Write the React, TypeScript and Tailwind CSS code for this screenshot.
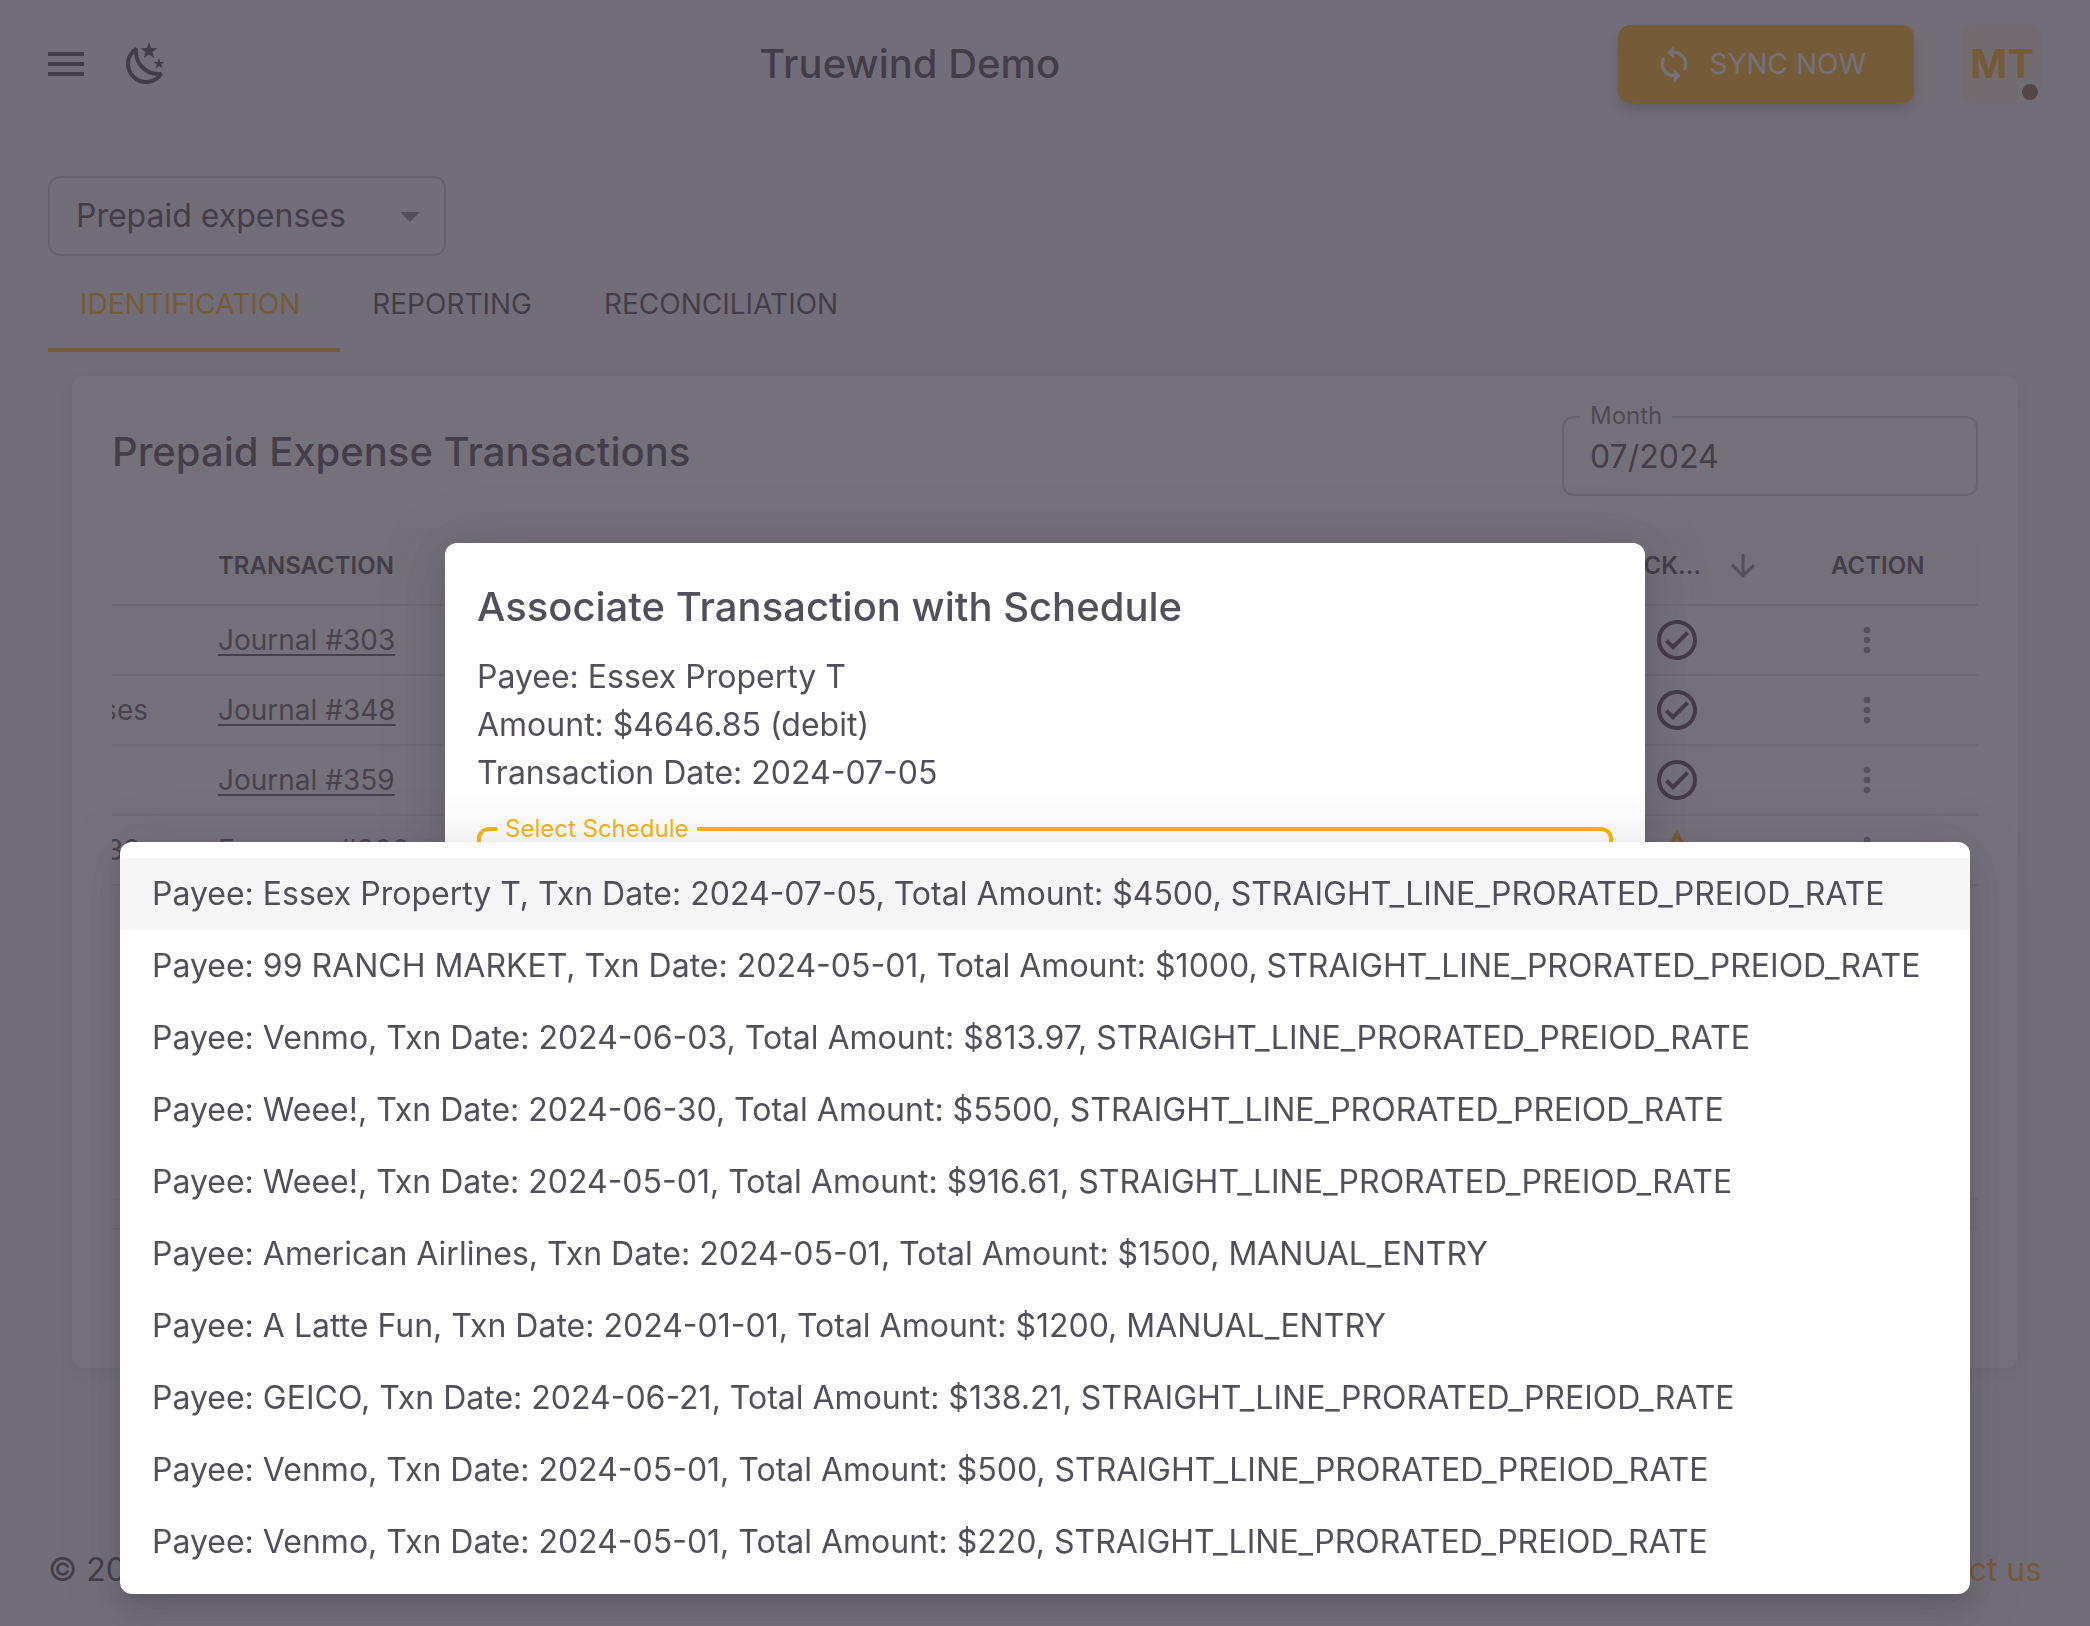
import React, { useState } from 'react';

const SCHEDULES = [
  'Payee: Essex Property T, Txn Date: 2024-07-05, Total Amount: $4500, STRAIGHT_LINE_PRORATED_PREIOD_RATE',
  'Payee: 99 RANCH MARKET, Txn Date: 2024-05-01, Total Amount: $1000, STRAIGHT_LINE_PRORATED_PREIOD_RATE',
  'Payee: Venmo, Txn Date: 2024-06-03, Total Amount: $813.97, STRAIGHT_LINE_PRORATED_PREIOD_RATE',
  'Payee: Weee!, Txn Date: 2024-06-30, Total Amount: $5500, STRAIGHT_LINE_PRORATED_PREIOD_RATE',
  'Payee: Weee!, Txn Date: 2024-05-01, Total Amount: $916.61, STRAIGHT_LINE_PRORATED_PREIOD_RATE',
  'Payee: American Airlines, Txn Date: 2024-05-01, Total Amount: $1500, MANUAL_ENTRY',
  'Payee: A Latte Fun, Txn Date: 2024-01-01, Total Amount: $1200, MANUAL_ENTRY',
  'Payee: GEICO, Txn Date: 2024-06-21, Total Amount: $138.21, STRAIGHT_LINE_PRORATED_PREIOD_RATE',
  'Payee: Venmo, Txn Date: 2024-05-01, Total Amount: $500, STRAIGHT_LINE_PRORATED_PREIOD_RATE',
  'Payee: Venmo, Txn Date: 2024-05-01, Total Amount: $220, STRAIGHT_LINE_PRORATED_PREIOD_RATE',
];

interface Row {
  memo: string;
  transaction: string;
  tracked: boolean;
}

const ROWS: Row[] = [
  { memo: '', transaction: 'Journal #303', tracked: true },
  { memo: 'ses', transaction: 'Journal #348', tracked: true },
  { memo: '', transaction: 'Journal #359', tracked: true },
  { memo: '38.', transaction: 'Expense #300', tracked: false },
];

const TABS = ['Identification', 'Reporting', 'Reconciliation'];

const ICONS = {
  menu: 'M3 6H21V8H3V6M3 11H21V13H3V11M3 16H21V18H3V16Z',
  night:
    'M17.75 4.09L15.22 6.03L16.13 9.09L13.5 7.28L10.87 9.09L11.78 6.03L9.25 4.09L12.44 4L13.5 1L14.56 4L17.75 4.09M21.25 11L19.61 12.25L20.2 14.23L18.5 13.06L16.8 14.23L17.39 12.25L15.75 11L17.81 10.95L18.5 9L19.19 10.95L21.25 11M18.97 15.95C19.8 15.87 20.69 17.05 20.16 17.8C19.84 18.25 19.5 18.67 19.08 19.07C15.17 23 8.84 23 4.94 19.07C1.03 15.17 1.03 8.83 4.94 4.93C5.34 4.53 5.76 4.17 6.21 3.85C6.96 3.32 8.14 4.21 8.06 5.04C7.79 7.9 8.75 10.87 10.95 13.06C13.14 15.26 16.1 16.22 18.97 15.95M17.33 17.97C14.5 17.81 11.7 16.64 9.53 14.5C7.36 12.31 6.2 9.5 6.04 6.68C3.23 9.82 3.34 14.64 6.35 17.66C9.37 20.67 14.19 20.78 17.33 17.97Z',
  sync: 'M12 4V1L8 5l4 4V6c3.31 0 6 2.69 6 6 0 1.01-.25 1.97-.7 2.8l1.46 1.46C19.54 15.03 20 13.57 20 12c0-4.42-3.58-8-8-8m0 14c-3.31 0-6-2.69-6-6 0-1.01.25-1.97.7-2.8L5.24 7.74C4.46 8.97 4 10.43 4 12c0 4.42 3.58 8 8 8v3l4-4-4-4z',
  caret: 'M7 10l5 5 5-5z',
  arrowDown: 'M20 12l-1.41-1.41L13 16.17V4h-2v12.17l-5.58-5.59L4 12l8 8 8-8z',
  check:
    'M12 2C6.5 2 2 6.5 2 12S6.5 22 12 22 22 17.5 22 12 17.5 2 12 2M12 20C7.59 20 4 16.41 4 12S7.59 4 12 4 20 7.59 20 12 16.41 20 12 20M16.59 7.58L10 14.17L7.41 11.59L6 13L10 17L18 9L16.59 7.58Z',
  alert: 'M12 2L1 21H23M12 6L19.53 19H4.47M11 10V14H13V10M11 16V18H13V16',
  dots: 'M12 16A2 2 0 0 1 14 18 2 2 0 0 1 12 20 2 2 0 0 1 10 18 2 2 0 0 1 12 16M12 10A2 2 0 0 1 14 12 2 2 0 0 1 12 14 2 2 0 0 1 10 12 2 2 0 0 1 12 10M12 4A2 2 0 0 1 14 6 2 2 0 0 1 12 8 2 2 0 0 1 10 6 2 2 0 0 1 12 4Z',
};

const Icon: React.FC<{ name: keyof typeof ICONS; className: string }> = ({ name, className }) => (
  <svg viewBox="0 0 24 24" fill="currentColor" aria-hidden="true" className={`shrink-0 ${className}`}>
    <path d={ICONS[name]} />
  </svg>
);

const Header: React.FC = () => (
  <header className="flex h-32 items-center justify-between px-12">
    <div className="-ml-[22px] flex items-center pr-4">
      <button type="button" aria-label="Open menu" className="p-4">
        <Icon name="menu" className="size-12" />
      </button>
      <button type="button" aria-label="Toggle dark mode" className="p-4">
        <Icon name="night" className="size-12" />
      </button>
    </div>
    <h1 className="text-[40px] font-medium">Truewind Demo</h1>
    <div className="flex items-center gap-12">
      <button
        type="button"
        className="flex h-[78px] items-center gap-4 rounded-xl bg-[#fdb422] pr-12 pl-9 text-[28px] text-white uppercase shadow-[0_8px_16px_-4px_rgba(58,53,65,0.42)]"
      >
        <Icon name="sync" className="size-10" />
        Sync now
      </button>
      <div className="relative flex size-20 items-center justify-center rounded-xl bg-[#fdb422]/12 text-[40px] font-bold text-[#fdb422]">
        MT
        <span className="absolute right-0 bottom-0 size-6 rounded-full border-4 border-[#f4f5fa] bg-[#8a6e50]" />
      </div>
    </div>
  </header>
);

const TransactionsTable: React.FC = () => (
  <div className="mt-8 min-h-[670px] overflow-hidden rounded-t-xl">
    <table className="w-full table-fixed border-collapse text-left">
      <colgroup>
        <col className="w-[86px]" />
        <col className="w-[300px]" />
        <col />
        <col className="w-[182px]" />
        <col className="w-[167px]" />
      </colgroup>
      <thead className="bg-[#f9fafc] text-2xl uppercase">
        <tr className="h-[77px] border-b-2 border-[#3a3541]/12">
          <th aria-label="Memo" />
          <th className="px-5 font-semibold">Transaction</th>
          <th aria-label="Details" />
          <th className="font-semibold">
            <div className="flex items-center justify-end gap-6 pr-[50px]">
              Track...
              <Icon name="arrowDown" className="size-9 text-[#3a3541]/54" />
            </div>
          </th>
          <th className="px-5 font-semibold">Action</th>
        </tr>
      </thead>
      <tbody className="text-[28px] text-[#3a3541]/80">
        {ROWS.map((row) => (
          <tr key={row.transaction} className="h-[70px] border-b-2 border-[#3a3541]/12">
            <td>
              <div className="flex w-9 justify-end overflow-hidden whitespace-nowrap">{row.memo}</div>
            </td>
            <td className="px-5">
              <a href="#" className="underline decoration-2 underline-offset-4">
                {row.transaction}
              </a>
            </td>
            <td />
            <td className="pl-6">
              {row.tracked ? (
                <Icon name="check" className="size-12 text-[#5c4c4a]" />
              ) : (
                <Icon name="alert" className="size-12 text-[#fdb422]" />
              )}
            </td>
            <td className="px-5">
              <button type="button" aria-label="Row actions" className="block px-4">
                <Icon name="dots" className="size-10 text-[#3a3541]/54" />
              </button>
            </td>
          </tr>
        ))}
      </tbody>
    </table>
  </div>
);

const AssociateDialog: React.FC<{ schedule: string }> = ({ schedule }) => (
  <div className="fixed inset-0 flex items-center justify-center bg-[#3a3541]/70">
    <div
      role="dialog"
      aria-labelledby="dialog-title"
      className="w-[1200px] max-w-full rounded-xl bg-white p-8 shadow-[0_12px_28px_-8px_rgba(58,53,65,0.3),0_8px_60px_8px_rgba(58,53,65,0.2)]"
    >
      <h2 id="dialog-title" className="text-[40px] leading-16 font-medium">
        Associate Transaction with Schedule
      </h2>
      <div className="mt-3.5 text-[32px] leading-12">
        <p>Payee: Essex Property T</p>
        <p>Amount: $4646.85 (debit)</p>
        <p>Transaction Date: 2024-07-05</p>
      </div>
      <fieldset className="mt-4 h-24 min-w-0 rounded-xl border-4 border-[#fdb414] px-4">
        <legend className="px-2 text-2xl leading-8 text-[#fdb414]">Select Schedule</legend>
        <button type="button" aria-haspopup="listbox" className="block w-full truncate text-left text-[28px]">
          {schedule}
        </button>
      </fieldset>
      <div className="mt-16 flex justify-end gap-4 text-[28px]">
        <button type="button" className="h-[78px] px-6 uppercase">
          Cancel
        </button>
        <button type="button" className="h-[78px] rounded-xl bg-[#fdb414] px-6 text-white uppercase">
          Save
        </button>
      </div>
    </div>
  </div>
);

const App: React.FC = () => {
  const [tab, setTab] = useState(TABS[0]);
  const [schedule, setSchedule] = useState(0);

  return (
    <div className="flex min-h-screen flex-col bg-[#f4f5fa] font-['Inter',sans-serif] text-[#3a3541]/87">
      <Header />

      <main className="flex grow flex-col px-12 pt-12">
        <div className="relative w-[398px]">
          <select
            aria-label="Report"
            defaultValue="prepaid"
            className="h-20 w-full appearance-none rounded-xl border-2 border-[#3a3541]/22 px-[26px] text-[32px]"
          >
            <option value="prepaid">Prepaid expenses</option>
          </select>
          <Icon name="caret" className="pointer-events-none absolute top-4 right-3 size-12 text-[#3a3541]/54" />
        </div>

        <div role="tablist" className="flex">
          {TABS.map((name) => (
            <button
              key={name}
              type="button"
              role="tab"
              aria-selected={name === tab}
              onClick={() => setTab(name)}
              className={`h-24 border-y-4 border-t-transparent pr-10 pl-8 text-[28px] uppercase ${
                name === tab ? 'border-b-[#fdb422] text-[#fdb422]' : 'border-b-transparent'
              }`}
            >
              {name}
            </button>
          ))}
        </div>

        <section className="m-6 rounded-xl bg-white p-10 shadow-[0_4px_20px_rgba(58,53,65,0.1)]">
          <div className="flex items-start justify-between">
            <h2 className="pt-1 text-[40px] leading-16 font-medium">Prepaid Expense Transactions</h2>
            <div className="relative w-[416px]">
              <label htmlFor="month" className="absolute -top-4 left-[18px] bg-white px-2.5 text-2xl text-[#3a3541]/68">
                Month
              </label>
              <input
                id="month"
                defaultValue="07/2024"
                className="h-20 w-full rounded-xl border-2 border-[#3a3541]/22 px-[26px] text-[32px]"
              />
            </div>
          </div>
          <TransactionsTable />
          {/* scroll track of the grid */}
          <div className="h-8 border-y-2 border-[#3a3541]/8 bg-[#fafafa]" />
          <div className="h-[98px]" />
        </section>
      </main>

      <footer className="flex h-28 items-center justify-between px-12 text-[32px]">
        <span>© 2024, Truewind</span>
        <a href="#" className="text-[#fdb422]">
          Contact us
        </a>
      </footer>

      <AssociateDialog schedule={SCHEDULES[schedule]} />

      <div className="pointer-events-none fixed inset-0 flex items-end px-[120px] pb-8">
        <ul
          role="listbox"
          aria-label="Select Schedule"
          className="pointer-events-auto w-full rounded-xl bg-white py-4 shadow-[0_10px_12px_-6px_rgba(58,53,65,0.2),0_16px_20px_2px_rgba(58,53,65,0.14),0_6px_56px_8px_rgba(58,53,65,0.12)]"
        >
          {SCHEDULES.map((item, i) => (
            <li
              key={item}
              role="option"
              aria-selected={i === schedule}
              onClick={() => setSchedule(i)}
              className={`flex h-18 cursor-pointer items-center px-8 text-[32px] whitespace-nowrap ${
                i === schedule ? 'bg-[#f6f6f6]' : ''
              }`}
            >
              {item}
            </li>
          ))}
        </ul>
      </div>
    </div>
  );
};

export default App;
